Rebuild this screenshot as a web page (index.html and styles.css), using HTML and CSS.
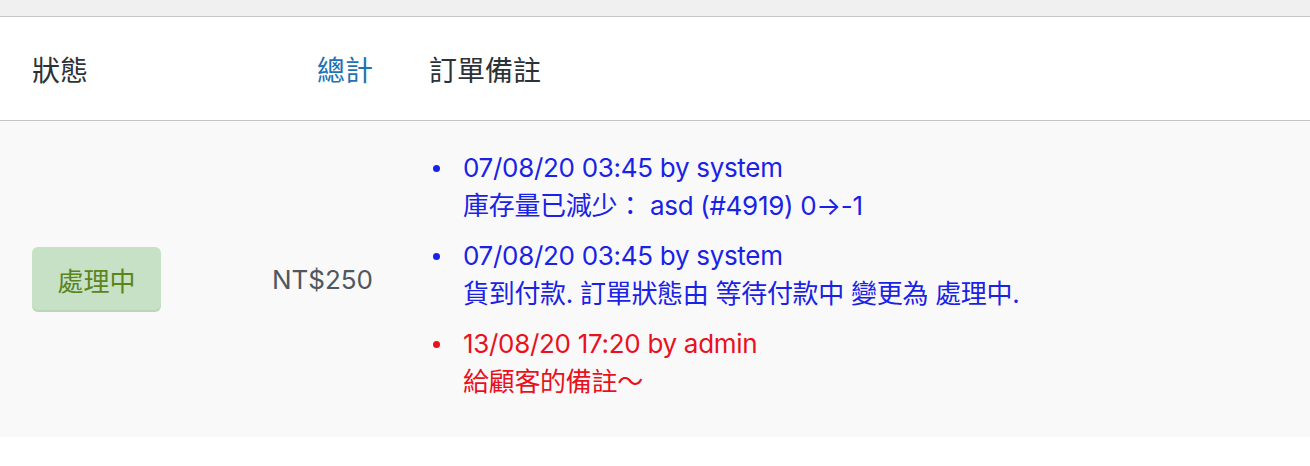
FILE: index.html
```html
<!DOCTYPE html>
<html lang="zh-Hant">
<head>
<meta charset="utf-8">
<title>Orders</title>
<link rel="stylesheet" href="styles.css">
</head>
<body>
<div class="topbar"></div>
<table class="orders">
  <thead>
    <tr>
      <th class="col-status">狀態</th>
      <th class="col-total"><a href="#">總計</a></th>
      <th class="col-notes">訂單備註</th>
    </tr>
  </thead>
  <tbody>
    <tr>
      <td class="col-status"><mark class="status-badge">處理中</mark></td>
      <td class="col-total amount">NT$250</td>
      <td class="col-notes notes-cell">
        <ul class="notes">
          <li class="note system">07/08/20 03:45 by system<br>庫存量已減少： asd (#4919) 0→-1</li>
          <li class="note system">07/08/20 03:45 by system<br>貨到付款. 訂單狀態由 等待付款中 變更為 處理中.</li>
          <li class="note customer">13/08/20 17:20 by admin<br>給顧客的備註～</li>
        </ul>
      </td>
    </tr>
  </tbody>
</table>
</body>
</html>
```
FILE: styles.css
```css
html, body {
  margin: 0;
  padding: 0;
  background: #ffffff;
}
body {
  font-family: Inter, "Noto Sans CJK TC", sans-serif;
}
.topbar {
  height: 16px;
  background: #f0f0f1;
  border-bottom: 1px solid #c3c4c7;
}
.orders {
  width: 100%;
  border-collapse: collapse;
  table-layout: fixed;
}
.orders th {
  height: 103px;
  padding: 0;
  font-size: 28px;
  font-weight: 400;
  color: #2c3338;
  text-align: left;
  border-bottom: 1px solid #c3c4c7;
  vertical-align: middle;
}
.orders th a {
  color: #2271b1;
  text-decoration: none;
}
.orders td {
  padding: 0;
  background: #f9f9f9;
  vertical-align: middle;
  font-size: 26px;
}
.col-status {
  width: 178px;
  padding-left: 32px !important;
}
.col-total {
  width: 163px;
  padding-right: 24px !important;
  text-align: right !important;
}
.col-notes {
  padding-left: 32px !important;
}
.status-badge {
  display: inline-flex;
  align-items: center;
  height: 65px;
  padding: 0 25.5px;
  border-radius: 6px;
  background: #c6e1c6;
  color: #5b841b;
  font-size: 26px;
  box-shadow: inset 0 -2px 0 rgba(0, 0, 0, 0.05);
  box-sizing: border-box;
}
.amount {
  color: #50575e;
}
.notes-cell {
  padding-top: 28px !important;
  padding-bottom: 24px !important;
}
.notes {
  margin: 0;
  padding: 0 0 0 34px;
  list-style: none;
}
.note {
  position: relative;
  line-height: 38px;
  margin-bottom: 12px;
  letter-spacing: -0.3px;
}
.note::before {
  content: "";
  position: absolute;
  left: -30px;
  top: 16px;
  width: 7px;
  height: 7px;
  border-radius: 50%;
  background: currentColor;
}
.note.system {
  color: #1a22e6;
}
.note.customer {
  color: #e8111d;
}
```
